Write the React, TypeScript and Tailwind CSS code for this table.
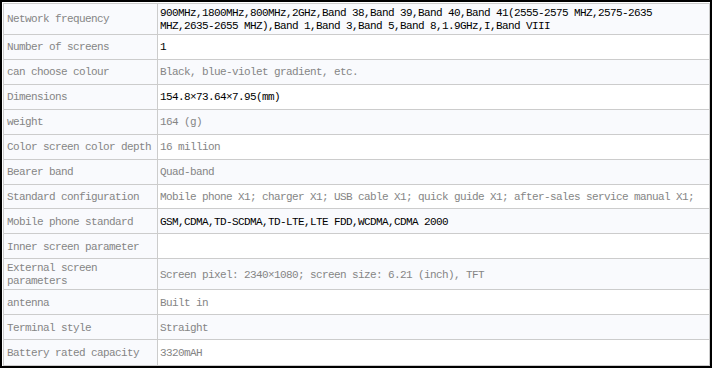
const rows: { label: string; value: string; dark?: boolean; tall?: boolean }[] = [
  {
    label: 'Network frequency',
    value:
      '900MHz,1800MHz,800MHz,2GHz,Band 38,Band 39,Band 40,Band 41(2555-2575 MHZ,2575-2635 MHZ,2635-2655 MHZ),Band 1,Band 3,Band 5,Band 8,1.9GHz,I,Band VIII',
    dark: true,
    tall: true,
  },
  { label: 'Number of screens', value: '1', dark: true },
  { label: 'can choose colour', value: 'Black, blue-violet gradient, etc.' },
  { label: 'Dimensions', value: '154.8×73.64×7.95(mm)', dark: true },
  { label: 'weight', value: '164 (g)' },
  { label: 'Color screen color depth', value: '16 million' },
  { label: 'Bearer band', value: 'Quad-band' },
  {
    label: 'Standard configuration',
    value: 'Mobile phone X1; charger X1; USB cable X1; quick guide X1; after-sales service manual X1;',
  },
  { label: 'Mobile phone standard', value: 'GSM,CDMA,TD-SCDMA,TD-LTE,LTE FDD,WCDMA,CDMA 2000', dark: true },
  { label: 'Inner screen parameter', value: '' },
  {
    label: 'External screen parameters',
    value: 'Screen pixel: 2340×1080; screen size: 6.21 (inch), TFT',
    tall: true,
  },
  { label: 'antenna', value: 'Built in' },
  { label: 'Terminal style', value: 'Straight' },
  { label: 'Battery rated capacity', value: '3320mAH' },
];

export default function App() {
  return (
    <div
      className="h-[368px] w-[712px] border-2 border-black bg-white text-[11px] leading-[13px] tracking-[-0.6px]"
      style={{ fontFamily: '"Liberation Mono", "Noto Sans CJK SC", monospace' }}
    >
      <div className="ml-px mt-px flex h-[363px] w-[707px] flex-col border border-[#cccccc]">
        {rows.map((r, i) => (
          <div
            key={r.label}
            className={`flex ${r.tall ? 'h-[31px]' : 'h-[25px]'} ${
              i < rows.length - 1 ? 'border-b border-[#cccccc]' : ''
            } ${i % 2 === 0 ? 'bg-[#f9fafd]' : 'bg-white'}`}
          >
            <div className="flex w-[154px] shrink-0 items-center border-r border-[#cccccc] bg-[#f9fafd] pl-[3px] pr-[2px] pt-[2px] text-[#858585]">
              {r.label}
            </div>
            <div
              className={`flex min-w-0 flex-1 items-center pl-[2px] pr-[2px] pt-[2px] ${
                r.dark ? 'text-black' : 'text-[#858585]'
              }`}
            >
              <span className={r.tall ? '' : 'whitespace-nowrap'}>{r.value}</span>
            </div>
          </div>
        ))}
      </div>
    </div>
  );
}
